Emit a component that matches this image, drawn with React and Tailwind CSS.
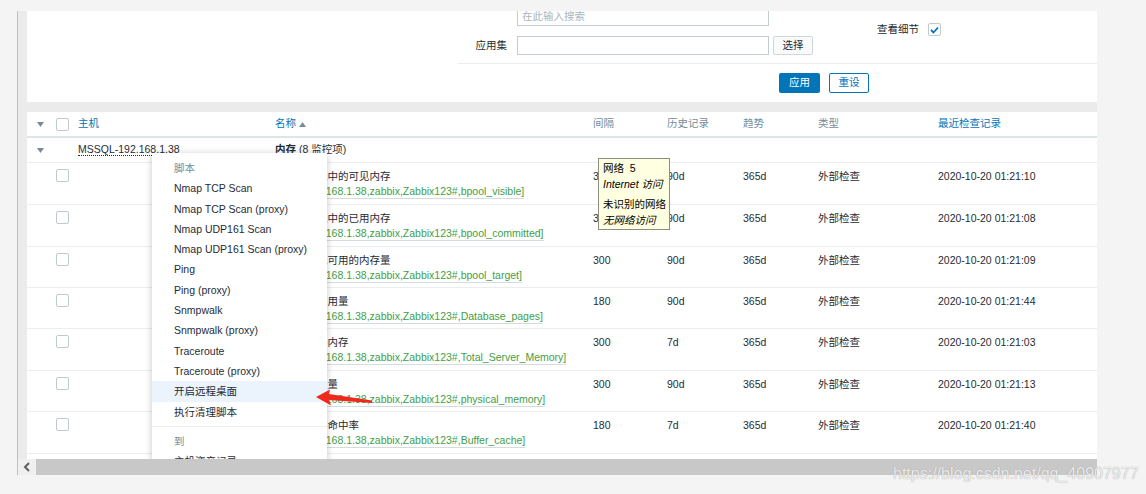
import React from 'react'

const FONT = { fontFamily: '"Liberation Sans", "Noto Sans CJK SC", sans-serif' }

const ITEMS = [
  { name: 'SQL缓冲池中的可见内存', key: 'bpool_visible', interval: '300', history: '90d', last: '2020-10-20 01:21:10', h: 'h-[42px]' },
  { name: 'SQL缓冲池中的已用内存', key: 'bpool_committed', interval: '300', history: '90d', last: '2020-10-20 01:21:08', h: 'h-[42px]' },
  { name: 'SQL缓冲池可用的内存量', key: 'bpool_target', interval: '300', history: '90d', last: '2020-10-20 01:21:09', h: 'h-[41px]' },
  { name: '数据库页面用量', key: 'Database_pages', interval: '180', history: '90d', last: '2020-10-20 01:21:44', h: 'h-[41px]' },
  { name: 'SQL服务器内存', key: 'Total_Server_Memory', interval: '300', history: '7d', last: '2020-10-20 01:21:03', h: 'h-[42px]' },
  { name: '物理内存用量', key: 'physical_memory', interval: '300', history: '90d', last: '2020-10-20 01:21:13', h: 'h-[41px]' },
  { name: '缓冲区缓存命中率', key: 'Buffer_cache', interval: '180', history: '7d', last: '2020-10-20 01:21:40', h: 'h-[42px]' },
  { name: '页面生命期望值', key: 'Page_life', interval: '300', history: '90d', last: '2020-10-20 01:21:11', h: 'h-[42px]' },
]

const MENU = [
  'Nmap TCP Scan',
  'Nmap TCP Scan (proxy)',
  'Nmap UDP161 Scan',
  'Nmap UDP161 Scan (proxy)',
  'Ping',
  'Ping (proxy)',
  'Snmpwalk',
  'Snmpwalk (proxy)',
  'Traceroute',
  'Traceroute (proxy)',
  '开启远程桌面',
  '执行清理脚本',
]

function Caret({ up }) {
  return (
    <svg width="7" height="5" viewBox="0 0 7 5" className="shrink-0">
      {up ? <polygon points="0,5 7,5 3.5,0" fill="#768d99" /> : <polygon points="0,0 7,0 3.5,5" fill="#768d99" />}
    </svg>
  )
}

function Box({ checked }) {
  return (
    <div className="w-[13px] h-[13px] rounded-[2px] border border-[#bfc9ce] bg-white flex items-center justify-center">
      {checked && (
        <svg width="9" height="8" viewBox="0 0 9 8">
          <polyline points="1,4 3.5,6.5 8,1.5" fill="none" stroke="#0275b8" strokeWidth="1.8" />
        </svg>
      )}
    </div>
  )
}

function FilterPanel() {
  return (
    <div className="h-[91px] shrink-0 bg-white overflow-hidden flex flex-col text-[10.5px] text-[#1f2c33]">
      <div className="flex items-start">
        <div className="pl-[431px] flex flex-col -mt-[4px]">
          <div className="flex">
            <div className="w-[49px]" />
            <div className="ml-[10px] w-[252px] h-[19px] border border-[#c2ccd1] px-[4px] flex items-center text-[#a9b5bb]">
              在此输入搜索
            </div>
          </div>
          <div className="flex items-center mt-[10px]">
            <div className="w-[49px] text-right">应用集</div>
            <div className="ml-[10px] w-[252px] h-[19px] border border-[#c2ccd1]" />
            <button className="ml-[4px] w-[40px] h-[19px] border border-[#d0d7db] rounded-[2px] bg-[#fafafa] text-[#1f2c33]">选择</button>
          </div>
        </div>
        <div className="ml-[64px] pt-[11px] flex items-center gap-[9px]">
          <span>查看细节</span>
          <Box checked />
        </div>
      </div>
      <div className="ml-[431px] mt-[8px] border-t border-[#ebeef0]" />
      <div className="pl-[752px] mt-[9px] flex gap-[9px]">
        <button className="w-[41px] h-[20px] rounded-[2px] bg-[#0275b8] text-white">应用</button>
        <button className="w-[40px] h-[20px] rounded-[2px] border border-[#0275b8] bg-white text-[#0275b8]">重设</button>
      </div>
    </div>
  )
}

function ContextMenu() {
  return (
    <div className="absolute left-[125px] top-[41px] w-[175px] bg-white shadow-[0_1px_7px_rgba(0,0,0,0.22)] pt-[5px] pb-[6px] text-[10.5px] text-[#1f2c33]">
      <div className="h-[20.3px] leading-[20.3px] pl-[22px] text-[#768d99]">脚本</div>
      {MENU.map((m) => (
        <div key={m} className={`h-[20.3px] leading-[20.3px] pl-[22px] ${m === '开启远程桌面' ? 'bg-[#ebf4fc]' : ''}`}>
          {m}
        </div>
      ))}
      <div className="my-[4px] h-px bg-[#ebeef0]" />
      <div className="h-[20.3px] leading-[20.3px] pl-[22px] text-[#768d99]">到</div>
      <div className="h-[20.3px] leading-[20.3px] pl-[22px]">主机资产记录</div>
      <div className="h-[20.3px] leading-[20.3px] pl-[22px]">最新数据</div>
    </div>
  )
}

function ItemTable() {
  return (
    <div className="relative h-[347px] shrink-0 bg-white overflow-hidden text-[10.5px] text-[#1f2c33]">
      <div className="flex items-center h-[26px] border-b-2 border-[#dfe4e7] text-[#768d99]">
        <div className="w-[29px] pl-[10px] flex"><Caret /></div>
        <div className="w-[22px]"><Box /></div>
        <div className="w-[197px] text-[#0275b8]">主机</div>
        <div className="w-[318px] text-[#0275b8] flex items-center gap-[3px]">名称 <Caret up /></div>
        <div className="w-[74px]">间隔</div>
        <div className="w-[76px]">历史记录</div>
        <div className="w-[75px]">趋势</div>
        <div className="w-[120px]">类型</div>
        <div className="flex-1 text-[#0275b8]">最近检查记录</div>
      </div>
      <div className="flex items-center h-[25px] border-b border-[#ebeef0]">
        <div className="w-[29px] pl-[10px] flex"><Caret /></div>
        <div className="w-[22px]" />
        <div className="w-[197px]">
          <span className="border-b border-dotted border-[#1f2c33]">MSSQL-192.168.1.38</span>
        </div>
        <div className="w-[318px]"><span className="font-bold">内存</span> (8 监控项)</div>
      </div>
      {ITEMS.map((it) => (
        <div key={it.key} className={`flex shrink-0 items-start pt-[6px] border-b border-[#ebeef0] ${it.h} leading-[15px]`}>
          <div className="w-[29px]" />
          <div className="w-[22px]"><Box /></div>
          <div className="w-[197px]" />
          <div className="w-[318px] flex flex-col items-start">
            <span>{it.name}</span>
            <span className="text-[#429e47] border-b border-[#d5dcdf] leading-[14px]">
              mssql[192.168.1.38,zabbix,Zabbix123#,{it.key}]
            </span>
          </div>
          <div className="w-[74px]">{it.interval}</div>
          <div className="w-[76px]">{it.history}</div>
          <div className="w-[75px]">365d</div>
          <div className="w-[120px]">外部检查</div>
          <div className="flex-1">{it.last}</div>
        </div>
      ))}
      <ContextMenu />
    </div>
  )
}

function Scrollbar() {
  return (
    <div className="flex h-[16px] shrink-0">
      <div className="w-[18px] bg-[#f0f0f0] flex items-center justify-center">
        <svg width="8" height="10" viewBox="0 0 8 10">
          <polyline points="6,1 2,5 6,9" fill="none" stroke="#606060" strokeWidth="2" />
        </svg>
      </div>
      <div className="flex-1 bg-[#c8c8c8]" />
    </div>
  )
}

export default function App() {
  return (
    <div className="relative w-[1146px] h-[494px] overflow-hidden bg-[#f4f4f4]" style={FONT}>
      <div className="h-[11px]" />
      <div className="flex">
        <div className="w-[17px] shrink-0" />
        <div className="w-[1080px] border-l border-[#d3bf95] bg-[#ebebeb] flex flex-col">
          <div className="pl-[9px] flex flex-col gap-[10px]">
            <FilterPanel />
            <ItemTable />
          </div>
          <Scrollbar />
        </div>
      </div>

      <div className="absolute left-[598px] top-[158px] w-[72px] h-[72px] bg-[#ffffe1] border border-[#8d8d80] pl-[4px] pt-[1px] text-[10.5px] leading-[16px] text-black whitespace-nowrap">
        <div>网络&nbsp;&nbsp;5</div>
        <div className="italic">Internet 访问</div>
        <div className="mt-[4px]">未识别的网络</div>
        <div className="italic">无网络访问</div>
      </div>

      <svg className="absolute left-[312px] top-[386px]" width="64" height="22" viewBox="0 0 64 22">
        <polygon points="4,11 18,3.5 17,8 60,14.5 60,17 17,14 19,19.5" fill="#ee2a1d" />
      </svg>

      <div className="absolute left-[893px] top-[464px] text-[16px] leading-[20px] text-white/80 [text-shadow:0_0_1px_#8a8a8a]">
        https://blog.csdn.net/qq_40907977
      </div>
    </div>
  )
}
